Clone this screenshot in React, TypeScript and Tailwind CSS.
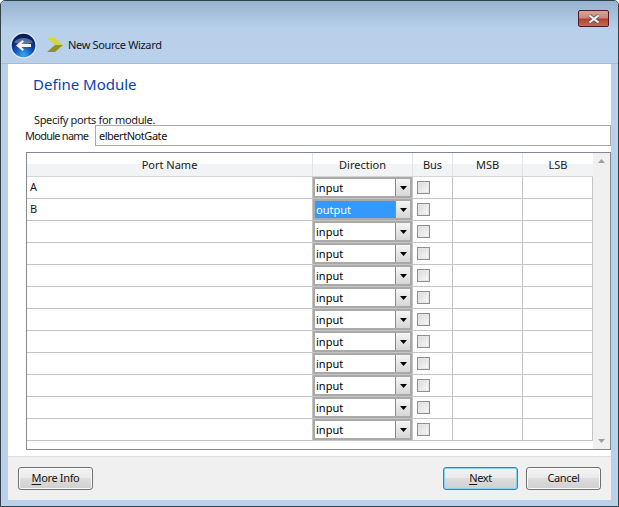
const ROWS = [
  { name: "A", dir: "input" },
  { name: "B", dir: "output" },
  ...Array.from({ length: 10 }, () => ({ name: "", dir: "input" })),
];

function BackIcon() {
  return (
    <svg width="27" height="27" viewBox="0 0 27 27">
      <defs>
        <radialGradient id="orb" cx="50%" cy="90%" r="75%">
          <stop offset="0%" stopColor="#39a8f5" />
          <stop offset="55%" stopColor="#0c4fb4" />
          <stop offset="100%" stopColor="#06205f" />
        </radialGradient>
      </defs>
      <circle cx="13.5" cy="13.5" r="13.2" fill="#dbe7f3" />
      <circle cx="13.5" cy="13.5" r="11.8" fill="url(#orb)" />
      <path d="M4 10.5 A10.5 8 0 0 1 23 10.5 Q13.5 13.5 4 10.5Z" fill="#ffffff" opacity="0.3" />
      <path d="M6 13.5 L12.5 8 L14 9.5 L11.5 12 H21 V15 H11.5 L14 17.5 L12.5 19Z" fill="#f2f2ee" />
    </svg>
  );
}

function Chevron() {
  return (
    <svg width="16" height="14" viewBox="0 0 16 14">
      <path d="M0 0 H8 L16 7 H8Z" fill="#d4d44a" />
      <path d="M16 7 L8 14 H0 L8 7Z" fill="#8f9420" />
    </svg>
  );
}

function CloseButton() {
  return (
    <div className="w-[31px] h-[17px] rounded-[2px] border border-[#4d1a2a] bg-[linear-gradient(#dda297_0%,#d0857a_45%,#b73f2c_55%,#c46a58_100%)] flex items-center justify-center">
      <svg width="14" height="10" viewBox="0 0 14 10">
        <path d="M2.5 1.5 L11.5 8.5 M11.5 1.5 L2.5 8.5" stroke="#5c5c68" strokeWidth="3.6" />
        <path d="M2.5 1.5 L11.5 8.5 M11.5 1.5 L2.5 8.5" stroke="#f1f1f1" strokeWidth="2.2" />
      </svg>
    </div>
  );
}

function Combo({ value }: { value: string }) {
  const selected = value === "output";
  return (
    <div className="w-[99px] h-[21px] border-2 border-[#a9a9a9] flex bg-white tracking-normal">
      <div className={`flex-1 pl-[1px] leading-[18px] ${selected ? "bg-[#3399ff] text-white" : "text-black"}`}>{value}</div>
      <div className="w-[15px] border-l border-[#8a8a8a] bg-[linear-gradient(#f6f6f6,#d6d6d6)] flex items-center justify-center">
        <svg width="7" height="4" viewBox="0 0 7 4">
          <path d="M0 0 H7 L3.5 4Z" fill="#000000" />
        </svg>
      </div>
    </div>
  );
}

function Check() {
  return <div className="w-[13px] h-[13px] border border-[#8e8f8f] bg-[linear-gradient(135deg,#d8d8d8,#fbfbfb)] outline outline-1 outline-offset-[-2px] outline-[#e6e6e6]" />;
}

function Btn({ under, rest, focus }: { under: string; rest: string; focus?: boolean }) {
  return (
    <div
      className={`w-[75px] h-[23px] rounded-[3px] border flex items-center justify-center text-[#151515] bg-[linear-gradient(#f3f3f3_0%,#ebebeb_45%,#dddddd_50%,#cfcfcf_100%)] ${
        focus ? "border-[#3c7fb1] shadow-[inset_0_0_0_1px_#7fd3f5]" : "border-[#707070] shadow-[inset_0_0_0_1px_#fbfbfb]"
      }`}
    >
      <span className="underline underline-offset-2">{under}</span>
      <span>{rest}</span>
    </div>
  );
}

export default function App() {
  return (
    <div className="w-[619px] h-[507px] overflow-hidden flex flex-col rounded-t-[5px] border-t border-x border-b border-[#2f4248] bg-[#b9d1ea] text-[11px] tracking-[-0.35px] text-[#1c2530] font-['Noto_Sans','Roboto',sans-serif]">
      <div className="h-[63px] shrink-0 pl-[9px] pr-[9px] flex flex-col bg-[linear-gradient(#98b3d0_0%,#b8d0e9_45%,#b9d1ea_100%)] border-b border-[#a6bad2]">
        <div className="flex justify-end h-[30px] pt-[9px]">
          <CloseButton />
        </div>
        <div className="flex items-center h-[28px]">
          <BackIcon />
          <div className="ml-[10px]">
            <Chevron />
          </div>
          <span className="ml-[5px] text-[#10151f]">New Source Wizard</span>
        </div>
      </div>

      <div className="flex-1 flex flex-col mx-[7px] mb-[6px] bg-white min-h-0">
        <div className="h-[392px] shrink-0 flex flex-col">
          <div className="pl-[25px] pt-[9px] h-[41px] text-[15px] tracking-normal text-[#0b3fb0] leading-[22px]">Define Module</div>
          <div className="pl-[26px] mt-[6px] leading-[17px] h-[14px] text-[#1a1a1a]">Specify ports for module.</div>
          <div className="flex items-center h-[21px] pl-[17px]">
            <span className="w-[70px] pt-[1px] whitespace-nowrap tracking-[-0.75px] text-[#1a1a1a]">Module name</span>
            <div className="w-[517px] h-[21px] border border-[#a9a9a9] pl-[3px] leading-[20px] tracking-[-0.45px] text-[#111]">elbertNotGate</div>
          </div>
          <div className="ml-[18px] w-[585px] h-[298px] mt-[6px] border border-[#828790] flex">
            <div className="w-[566px] flex flex-col text-[#1a1a1a]">
              <div className="h-[24px] flex border-b border-[#d5d5d5] tracking-normal bg-[linear-gradient(#ffffff_50%,#f2f3f5_50%)] shrink-0">
                <div className="w-[286px] text-center leading-[24px] border-r border-[#e1e3e6]">Port Name</div>
                <div className="w-[100px] text-center leading-[24px] border-r border-[#e1e3e6]">Direction</div>
                <div className="w-[40px] text-center leading-[24px] border-r border-[#e1e3e6]">Bus</div>
                <div className="w-[70px] text-center leading-[24px] border-r border-[#e1e3e6]">MSB</div>
                <div className="w-[70px] text-center leading-[24px]">LSB</div>
              </div>
              {ROWS.map((row, i) => (
                <div key={i} className="h-[22px] flex border-b border-[#c4c4c4] shrink-0">
                  <div className="w-[286px] pl-[3px] leading-[20px] border-r border-[#c4c4c4]">{row.name}</div>
                  <div className="w-[100px] border-r border-[#c4c4c4] flex items-start">
                    <Combo value={row.dir} />
                  </div>
                  <div className="w-[40px] border-r border-[#c4c4c4] flex items-center pl-[4px]">
                    <Check />
                  </div>
                  <div className="w-[70px] border-r border-[#c4c4c4]" />
                  <div className="w-[70px] border-r border-[#c4c4c4]" />
                </div>
              ))}
            </div>
            <div className="flex-1 flex flex-col justify-between items-center py-[6px] bg-[#f0f0f0]">
              <svg width="7" height="4" viewBox="0 0 7 4">
                <path d="M0 4 L3.5 0 L7 4Z" fill="#a0a0a0" />
              </svg>
              <svg width="7" height="4" viewBox="0 0 7 4">
                <path d="M0 0 H7 L3.5 4Z" fill="#a0a0a0" />
              </svg>
            </div>
          </div>
        </div>
        <div className="flex-1 bg-[#f0f0f0] border-t border-[#dfdfdf] flex items-center justify-between pl-[10px] pr-[10px]">
          <Btn under="M" rest="ore Info" />
          <div className="flex gap-[8px]">
            <Btn under="N" rest="ext" focus />
            <Btn under="" rest="Cancel" />
          </div>
        </div>
      </div>
    </div>
  );
}
